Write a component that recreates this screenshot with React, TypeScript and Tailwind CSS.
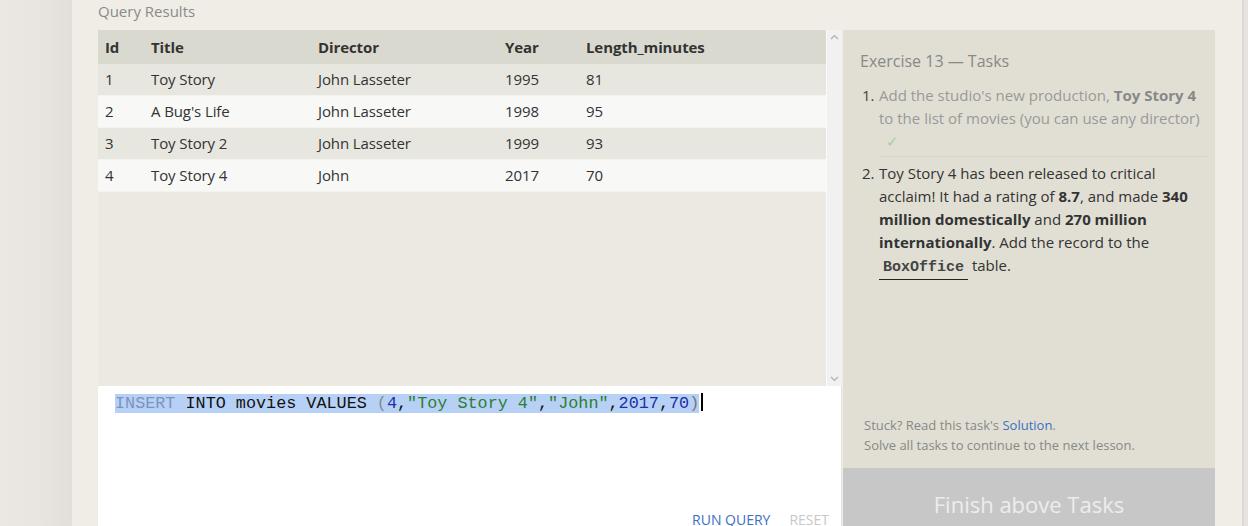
import React from 'react';

const rows = [
  { id: 1, title: 'Toy Story', director: 'John Lasseter', year: 1995, len: 81 },
  { id: 2, title: "A Bug's Life", director: 'John Lasseter', year: 1998, len: 95 },
  { id: 3, title: 'Toy Story 2', director: 'John Lasseter', year: 1999, len: 93 },
  { id: 4, title: 'Toy Story 4', director: 'John', year: 2017, len: 70 },
];

const sans = { fontFamily: '"Open Sans", "Noto Sans", sans-serif' };
const mono = { fontFamily: '"Liberation Mono", "Courier New", monospace' };

function Row({ cells, head, odd }: { cells: (string | number)[]; head?: boolean; odd?: boolean }) {
  const widths = ['w-[46px]', 'w-[167px]', 'w-[187px]', 'w-[81px]', 'flex-1'];
  return (
    <div
      className={
        'flex items-center pl-[7px] text-[15px] tracking-[-0.1px] ' +
        (head
          ? 'h-[34px] bg-[#dad9cf] font-bold text-[#333]'
          : 'h-[32px] border-b border-[#f4f3ef] ' + (odd ? 'bg-[#e8e7df]' : 'bg-[#f8f8f7]') + ' text-[#333]')
      }
    >
      {cells.map((c, i) => (
        <div key={i} className={widths[i]}>
          {c}
        </div>
      ))}
    </div>
  );
}

export default function App() {
  return (
    <div className="flex h-[526px] w-[1248px] overflow-hidden bg-[#ebe8e3]" style={sans}>
      <div className="w-[72px] shrink-0 bg-gradient-to-r from-[#ebe8e3] via-[#e9e6e1] to-[#e2dfda]" />
      <div className="flex w-[1170px] shrink-0 flex-col bg-[#f0ede6] pl-[26px] pr-[27px]">
        <div className="h-[30px] shrink-0 text-[15px] leading-[22px] text-[#8a8a8a]">Query Results</div>
        <div className="flex shrink-0 gap-px">
          <div className="flex w-[744px] flex-col">
            <div className="flex h-[356px]">
              <div className="w-[728px] bg-[#ebe9e1]">
                <Row head cells={['Id', 'Title', 'Director', 'Year', 'Length_minutes']} />
                {rows.map((r, i) => (
                  <Row key={r.id} odd={i % 2 === 0} cells={[r.id, r.title, r.director, r.year, r.len]} />
                ))}
              </div>
              <div className="flex w-[16px] flex-col items-center justify-between border-l border-[#fafafa] bg-[#f1f1f1] py-[4px] text-[#b0b0b0]">
                <svg width="9" height="6" viewBox="0 0 9 6" fill="none" stroke="currentColor" strokeWidth="1.2">
                  <path d="M1 5 L4.5 1.5 L8 5" />
                </svg>
                <svg width="9" height="6" viewBox="0 0 9 6" fill="none" stroke="currentColor" strokeWidth="1.2">
                  <path d="M1 1 L4.5 4.5 L8 1" />
                </svg>
              </div>
            </div>
            <div className="flex h-[140px] flex-col border-r border-[#e4e2dc] bg-white">
              <div className="pl-[17px] pt-[4px]">
                <span className="bg-[#b6d1f5] text-[16.8px] leading-[18px] text-[#111]" style={mono}>
                  <span className="text-[#7c93bd]">INSERT</span> INTO movies VALUES <span className="text-[#888]">(</span>
                  <span className="text-[#1c2fa8]">4</span>,<span className="text-[#2e7d32]">"Toy Story 4"</span>,
                  <span className="text-[#2e7d32]">"John"</span>,<span className="text-[#1c2fa8]">2017</span>,
                  <span className="text-[#1c2fa8]">70</span>
                  <span className="text-[#777]">)</span>
                </span>
                <span className="ml-[2px] inline-block h-[18px] w-[2px] translate-y-[3px] bg-black" />
              </div>
              <div className="mt-auto mb-[-4px] flex justify-end gap-[19px] pr-[12px] text-[14px]">
                <span className="text-[#3b6fc2]">RUN QUERY</span>
                <span className="text-[#c8c8c8]">RESET</span>
              </div>
            </div>
          </div>
          <div className="flex w-[372px] flex-col">
            <div className="flex h-[438px] flex-col bg-[#e1dfd4] pl-[17px] pr-[8px] pt-[20px]">
              <div className="text-[16px] leading-[22px] text-[#888]">Exercise 13 — Tasks</div>
              <ol className="mt-[12px] text-[15px] leading-[23px]">
                <li className="flex text-[#999]">
                  <span className="w-[19px] shrink-0 pl-[2px] text-[#444]">1.</span>
                  <div className="border-b border-[#d6d4ca] pb-[3px]">
                    Add the studio's new production, <b className="text-[#888]">Toy Story 4</b> to the list of movies (you
                    can use any director)
                    <div className="pl-[7px] text-[#9fd09f]">✓</div>
                  </div>
                </li>
                <li className="flex pt-[5px] text-[#333]">
                  <span className="w-[19px] shrink-0 pl-[2px]">2.</span>
                  <div>
                    Toy Story 4 has been released to critical acclaim! It had a rating of <b>8.7</b>, and made{' '}
                    <b>340 million domestically</b> and <b>270 million internationally</b>. Add the record to the{' '}
                    <code
                      className="inline-block border-b border-[#222] px-[4px] font-bold leading-[22px] text-[#444]"
                      style={mono}
                    >
                      BoxOffice
                    </code>{' '}
                    table.
                  </div>
                </li>
              </ol>
              <div className="mt-auto mb-[13px] pl-[4px] text-[13px] leading-[20px] text-[#888]">
                <div>
                  Stuck? Read this task's <span className="text-[#3b6fc2]">Solution</span>.
                </div>
                <div>Solve all tasks to continue to the next lesson.</div>
              </div>
            </div>
            <div className="flex h-[80px] justify-center bg-[#c7c7c7] pt-[20px] text-[22px] text-[#ededed]">
              Finish above Tasks
            </div>
          </div>
        </div>
      </div>
      <div className="w-[6px] shrink-0 border-l-2 border-[#dcd8d5] bg-[#e7e3e0]" />
    </div>
  );
}
